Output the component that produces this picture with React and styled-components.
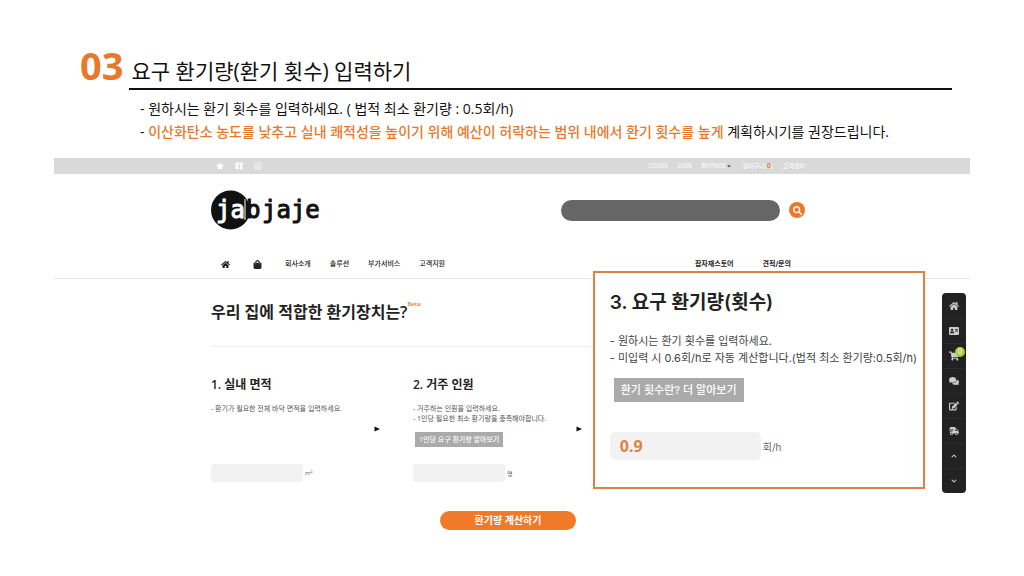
import React from 'react'
import styled, { createGlobalStyle } from 'styled-components'
import {
  FaStar,
  FaFacebookSquare,
  FaInstagram,
  FaSearch,
  FaHome,
  FaShoppingBag,
  FaAddressCard,
  FaShoppingCart,
  FaComments,
  FaEdit,
  FaShippingFast,
  FaChevronUp,
  FaChevronDown,
  FaCaretDown,
} from 'react-icons/fa'

const orange = '#e8792b'
const slideFont = '"Open Sans", "Noto Sans CJK KR", sans-serif'
const siteFont = 'Inter, "Noto Sans CJK KR", sans-serif'

const leftMenu = ['회사소개', '솔루션', '부가서비스', '고객지원']
const rightMenu = ['잡자재스토어', '견적/문의']

const quickLinks = [
  { label: '홈', icon: FaHome },
  { label: '회원정보', icon: FaAddressCard },
  { label: '장바구니', icon: FaShoppingCart, count: 0 },
  { label: '상담', icon: FaComments },
  { label: '글쓰기', icon: FaEdit },
  { label: '배송조회', icon: FaShippingFast },
  { label: '위로', icon: FaChevronUp },
  { label: '아래로', icon: FaChevronDown },
]

function Logo() {
  return (
    <LogoSvg viewBox="0 0 110 40" role="img" aria-label="jabjaje">
      <circle cx="19.5" cy="20" r="19.5" fill="#111" />
      <LogoText x="5" y="28" fill="#fff" stroke="#fff">ja</LogoText>
      <path d="M34 9V30" stroke="#fff" strokeWidth="1" />
      <LogoText x="35" y="28" fill="#111" stroke="#111">b</LogoText>
      <LogoText x="51" y="28" fill="#111" stroke="#111">jaje</LogoText>
    </LogoSvg>
  )
}

function Step({ id, title, lines, more, unit }) {
  return (
    <StepColumn>
      <StepBody>
        <StepTitle>
          <label htmlFor={id}>{title}</label>
        </StepTitle>
        <StepText>
          {lines.map(line => (
            <p key={line}>{line}</p>
          ))}
          {more && <MoreButton type="button">{more}</MoreButton>}
        </StepText>
        <Field>
          <FieldInput id={id} type="text" />
          <Unit>{unit}</Unit>
        </Field>
      </StepBody>
      <StepArrow viewBox="0 0 6 6" aria-hidden="true">
        <path d="M0.5 0.5L6 3L0.5 5.5Z" fill="#111" />
      </StepArrow>
    </StepColumn>
  )
}

export default function App() {
  return (
    <Slide>
      <GlobalStyle />
      <Heading>
        <HeadingNumber>03</HeadingNumber>
        <HeadingTitle>요구 환기량(환기 횟수) 입력하기</HeadingTitle>
      </Heading>
      <Notes>
        <p>- 원하시는 환기 횟수를 입력하세요. ( 법적 최소 환기량 : 0.5회/h)</p>
        <p>
          -{' '}
          <strong>
            이산화탄소 농도를 낮추고 실내 쾌적성을 높이기 위해 예산이 허락하는 범위 내에서 환기 횟수를 높게
          </strong>{' '}
          계획하시기를 권장드립니다.
        </p>
      </Notes>

      <Site>
        <TopBar>
          <Container>
            <Socials>
              <a href="#favorite" aria-label="즐겨찾기"><FaStar /></a>
              <a href="#facebook" aria-label="Facebook"><FaFacebookSquare /></a>
              <a href="#instagram" aria-label="Instagram"><FaInstagram /></a>
            </Socials>
            <UserLinks>
              <a href="#login">LOGIN</a>
              <a href="#join">JOIN</a>
              <a href="#mypage">MYPAGE <FaCaretDown color="#555" /></a>
              <a href="#cart">장바구니(<b>0</b>)</a>
              <a href="#help">고객센터</a>
            </UserLinks>
          </Container>
        </TopBar>

        <SiteHeader>
          <Brand>
            <a href="#home"><Logo /></a>
            <Search role="search">
              <SearchInput type="search" aria-label="검색" />
              <SearchButton type="button" aria-label="검색"><FaSearch /></SearchButton>
            </Search>
          </Brand>
          <Nav>
            <Menu>
              <a href="#home" aria-label="홈"><FaHome /></a>
              <a href="#shop" aria-label="쇼핑"><FaShoppingBag /></a>
              {leftMenu.map(name => (
                <a key={name} href="#menu">{name}</a>
              ))}
            </Menu>
            <RightMenu>
              {rightMenu.map(name => (
                <a key={name} href="#menu">{name}</a>
              ))}
            </RightMenu>
          </Nav>
        </SiteHeader>

        <Main>
          <PageTitle>
            우리 집에 적합한 환기장치는?<Beta>Beta</Beta>
          </PageTitle>
          <Steps>
            <Step
              id="area"
              title="1. 실내 면적"
              lines={['- 환기가 필요한 전체 바닥 면적을 입력하세요.']}
              unit="m²"
            />
            <Step
              id="people"
              title="2. 거주 인원"
              lines={['- 거주하는 인원을 입력하세요.', '- 1인당 필요한 최소 환기량을 충족해야합니다.']}
              more="1인당 요구 환기량 알아보기"
              unit="명"
            />
          </Steps>
          <SubmitButton type="button">환기량 계산하기</SubmitButton>
        </Main>

        <Callout>
          <CalloutTitle>
            <label htmlFor="rate">3. 요구 환기량(횟수)</label>
          </CalloutTitle>
          <CalloutText>
            <p>- 원하시는 환기 횟수를 입력하세요.</p>
            <p>- 미입력 시 0.6회/h로 자동 계산합니다.(법적 최소 환기량:0.5회/h)</p>
          </CalloutText>
          <CalloutButton type="button">환기 횟수란? 더 알아보기</CalloutButton>
          <Field>
            <CalloutInput id="rate" type="text" defaultValue="0.9" />
            <CalloutUnit>회/h</CalloutUnit>
          </Field>
        </Callout>

        <QuickBar aria-label="바로가기">
          {quickLinks.map(({ label, icon: Icon, count }) => (
            <QuickLink key={label} href="#quick" aria-label={label}>
              <Icon />
              {count !== undefined && <Count>{count}</Count>}
            </QuickLink>
          ))}
        </QuickBar>
      </Site>
    </Slide>
  )
}

const GlobalStyle = createGlobalStyle`
  * {
    box-sizing: border-box;
    margin: 0;
    padding: 0;
  }
  body {
    background: #fff;
    color: #111;
    font-family: ${slideFont};
  }
  a {
    color: inherit;
    text-decoration: none;
  }
  button, input {
    border: none;
    outline: none;
    font-family: inherit;
  }
  svg {
    display: block;
  }
`

const Slide = styled.div`
  padding: 40px 54px 0;
`

const Heading = styled.header`
  display: flex;
  align-items: flex-start;
  gap: 6px;
  padding: 0 18px 0 26px;
`

const HeadingNumber = styled.span`
  color: ${orange};
  font-size: 38px;
  font-weight: 700;
  line-height: 50px;
`

const HeadingTitle = styled.h1`
  flex: 1;
  padding: 14px 2px 0;
  border-bottom: 2px solid #111;
  font-size: 21px;
  font-weight: 400;
  line-height: 34px;
`

const Notes = styled.div`
  padding: 7px 0 15px 86px;
  font-size: 14px;
  line-height: 23px;
  strong {
    color: ${orange};
    font-weight: 500;
  }
`

const Site = styled.div`
  position: relative;
  font-family: ${siteFont};
`

const TopBar = styled.div`
  padding-right: 8px;
  background: #d9d9d9;
`

const Container = styled.div`
  display: flex;
  justify-content: space-between;
  align-items: center;
  max-width: 594px;
  height: 16px;
  margin: 0 auto;
  color: #fff;
  font-size: 6px;
`

const Socials = styled.div`
  display: flex;
  gap: 11px;
  padding-left: 5px;
  font-size: 8px;
`

const UserLinks = styled.div`
  display: flex;
  gap: 10px;
  line-height: 12px;
  a {
    display: flex;
    align-items: center;
  }
  b {
    color: ${orange};
  }
`

const SiteHeader = styled.div`
  padding-right: 8px;
  border-bottom: 1px solid #e8e8e8;
`

const Brand = styled.div`
  display: flex;
  justify-content: space-between;
  align-items: center;
  max-width: 594px;
  height: 72px;
  margin: 0 auto;
`

const LogoSvg = styled.svg`
  width: 110px;
  height: 40px;
`

const LogoText = styled.text`
  font-family: 'DejaVu Sans Mono', monospace;
  font-size: 24px;
  stroke-width: 1px;
`

const Search = styled.div`
  display: flex;
  align-items: center;
  gap: 9px;
`

const SearchInput = styled.input`
  width: 219px;
  height: 21px;
  padding: 0 10px;
  border-radius: 11px;
  background: #666;
  color: #fff;
`

const SearchButton = styled.button`
  display: flex;
  align-items: center;
  justify-content: center;
  width: 16px;
  height: 16px;
  border-radius: 50%;
  background: ${orange};
  color: #fff;
  font-size: 9px;
`

const Nav = styled.nav`
  display: flex;
  justify-content: space-between;
  max-width: 594px;
  margin: 0 auto;
  padding: 12px 14px 8px 10px;
  color: #222;
  font-size: 7px;
  font-weight: 500;
  line-height: 12px;
`

const Menu = styled.div`
  display: flex;
  align-items: center;
  gap: 19px;
  svg {
    font-size: 9px;
    margin-right: 4px;
  }
`

const RightMenu = styled.div`
  display: flex;
  gap: 29px;
  font-weight: 700;
`

const Main = styled.main`
  display: flex;
  flex-direction: column;
  max-width: 602px;
  margin: 0 auto;
  padding-right: 8px;
  font-family: ${slideFont};
`

const PageTitle = styled.h2`
  display: flex;
  padding: 21px 0;
  border-bottom: 1px solid #eee;
  color: #222;
  font-size: 16px;
  font-weight: 600;
  line-height: 25px;
`

const Beta = styled.sup`
  color: ${orange};
  font-size: 6px;
  line-height: 8px;
`

const Steps = styled.div`
  display: grid;
  grid-template-columns: repeat(3, 1fr);
  gap: 12px;
  padding: 29px 0;
`

const StepColumn = styled.section`
  display: flex;
  align-items: center;
  justify-content: space-between;
  padding-right: 21px;
  color: #222;
`

const StepArrow = styled.svg`
  width: 6px;
  height: 6px;
`

const StepBody = styled.div`
  white-space: nowrap;
`

const StepTitle = styled.h3`
  font-size: 12px;
  font-weight: 600;
  line-height: 18px;
`

const StepText = styled.div`
  height: 70px;
  padding-top: 10px;
  color: #555;
  font-size: 7px;
  line-height: 10px;
`

const MoreButton = styled.button`
  margin: 8px 2px 0;
  padding: 0 4px;
  background: #aaa;
  color: #fff;
  font-size: 7px;
  font-weight: 500;
  line-height: 15px;
`

const Field = styled.div`
  display: flex;
  align-items: center;
  gap: 2px;
`

const FieldInput = styled.input`
  width: 92px;
  height: 18px;
  padding: 0 6px;
  border-radius: 3px;
  background: #f2f2f2;
  font-size: 9px;
`

const Unit = styled.span`
  color: #666;
  font-size: 6px;
`

const SubmitButton = styled.button`
  align-self: center;
  width: 136px;
  border-radius: 10px;
  background: #f07a27;
  color: #fff;
  font-size: 10px;
  font-weight: 700;
  line-height: 19px;
`

const Callout = styled.section`
  position: absolute;
  top: 113px;
  right: 45px;
  padding: 18px 6px 27px 15px;
  border: 2px solid #dd8246;
  background: #fff;
  color: #444;
  white-space: nowrap;
`

const CalloutTitle = styled.h3`
  color: #222;
  font-size: 19px;
  font-weight: 600;
  line-height: 24px;
`

const CalloutText = styled.div`
  padding: 18px 0 11px;
  font-size: 11px;
  line-height: 17px;
`

const CalloutButton = styled.button`
  display: block;
  margin: 0 4px 30px;
  padding: 0 7px;
  background: #aaa;
  color: #fff;
  font-size: 11px;
  font-weight: 500;
  line-height: 24px;
`

const CalloutInput = styled(FieldInput)`
  width: 151px;
  height: 28px;
  padding: 0 10px;
  border-radius: 5px;
  color: #dd8246;
  font-family: ${slideFont};
  font-size: 16px;
  font-weight: 700;
`

const CalloutUnit = styled(Unit)`
  font-size: 10px;
`

const QuickBar = styled.nav`
  position: absolute;
  top: 135px;
  right: 4px;
  width: 24px;
  border-radius: 4px;
  background: #222;
`

const QuickLink = styled.a`
  position: relative;
  display: flex;
  align-items: center;
  justify-content: center;
  height: 25px;
  color: #ccc;
  font-size: 10px;
  & + & {
    border-top: 1px solid #2c2c2c;
  }
  &:nth-last-child(-n + 2) {
    font-size: 6px;
  }
`

const Count = styled.span`
  position: absolute;
  top: 3px;
  right: 1px;
  width: 10px;
  border-radius: 50%;
  background: #a4cf3a;
  color: #fff;
  font-size: 7px;
  line-height: 10px;
  text-align: center;
`
